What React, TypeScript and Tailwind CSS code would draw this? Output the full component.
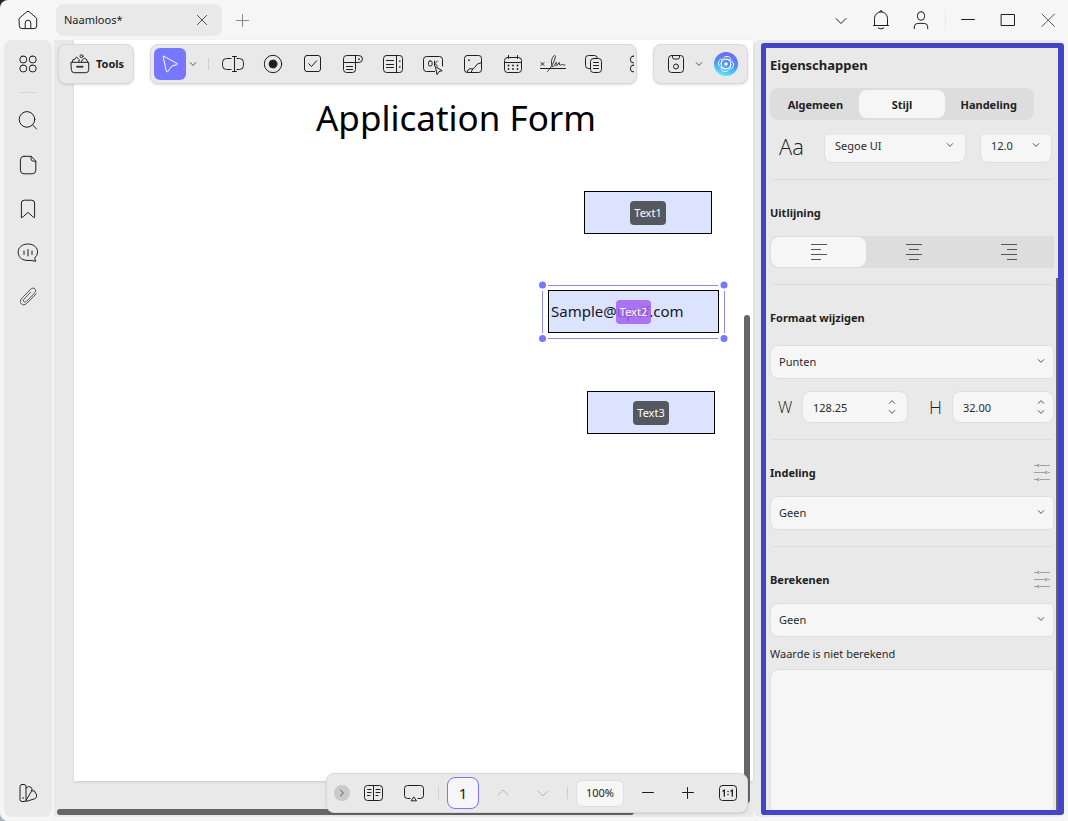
import type { ReactNode } from 'react';

const FONT = "font-['Noto_Sans','Open_Sans',sans-serif]";

function Icon({ children, color = 'text-[#1f1f1f]' }: { children: ReactNode; color?: string }) {
  return (
    <svg
      viewBox="0 0 28 28"
      className={`size-7 shrink-0 ${color}`}
      fill="none"
      stroke="currentColor"
      strokeWidth="1"
      strokeLinecap="round"
      strokeLinejoin="round"
      aria-hidden="true"
    >
      {children}
    </svg>
  );
}

function Chevron({ className = '' }: { className?: string }) {
  return (
    <svg viewBox="0 0 8 8" className={`size-2 shrink-0 text-[#555] ${className}`} fill="none" stroke="currentColor" strokeWidth="1" aria-hidden="true">
      <path d="M1 2.3 4 5.4 7 2.3" />
    </svg>
  );
}

function IconButton({ label, width = 'w-10', height = 'h-full', color, children }: { label: string; width?: string; height?: string; color?: string; children: ReactNode }) {
  return (
    <button type="button" aria-label={label} className={`flex shrink-0 items-center justify-center ${width} ${height}`}>
      <Icon color={color}>{children}</Icon>
    </button>
  );
}

function TitleBar() {
  return (
    <header className="flex h-10 shrink-0 items-center">
      <IconButton label="Home" width="w-14">
        <path d="M5.3 12.3 12.6 5.9Q14 4.8 15.4 5.9L22.7 12.3V20Q22.7 22.6 20.1 22.6H7.9Q5.3 22.6 5.3 20Z" />
        <path d="M11.2 22.5V17Q11.2 14.2 14 14.2T16.8 17V22.5" />
      </IconButton>
      <div className="flex h-8 w-[166px] items-center justify-between rounded-lg bg-[#e9e9e9] pl-2 pr-1.5">
        <span className="text-[11px] leading-5 text-[#222]">Naamloos*</span>
        <IconButton label="Tabblad sluiten" width="w-7" color="text-[#555]">
          <path d="m9.3 9.3 9.4 9.4M18.7 9.3l-9.4 9.4" />
        </IconButton>
      </div>
      <IconButton label="Nieuw tabblad" color="text-[#8a8a8a]">
        <path d="M14.5 8.5v12M8.500 14.5h12" />
      </IconButton>
      <div className="ml-auto flex h-full items-center">
        <IconButton label="Meer">
          <path d="m9 12.500 5 5 5-5" />
        </IconButton>
        <IconButton label="Meldingen">
          <path d="M7.500 19V12.4a6.500 6.500 0 0 1 13 0V19M6.500 19.500h15M12.8 5.8a1.2 1.2 0 0 1 2.4 0M11.2 22.1q2.8 1.8 5.6 0" />
        </IconButton>
        <IconButton label="Account">
          <rect x="10.500" y="5.700" width="7" height="8.600" rx="3.500" />
          <path d="M7.3 22.7V20.8Q7.3 17.4 10.8 17.4H17.2Q20.7 17.4 20.7 20.8V22.7" />
        </IconButton>
        <span className="ml-1 mr-0.5 h-5 w-px bg-[#e9e9e9]" />
        <IconButton label="Minimaliseren">
          <path d="M7.500 13.500h13" />
        </IconButton>
        <IconButton label="Maximaliseren">
          <rect x="7.500" y="8.500" width="13" height="11" />
        </IconButton>
        <IconButton label="Sluiten" color="text-[#555]">
          <path d="m8 8 12.4 12.4M20.4 8 8 20.4" />
        </IconButton>
      </div>
    </header>
  );
}

function Sidebar() {
  return (
    <nav aria-label="Zijbalk" className="flex w-12 shrink-0 flex-col items-center rounded-lg bg-[#e9e9e9] py-0.5">
      <IconButton label="Overzicht" height="h-11">
        <rect x="6" y="6.2" width="6.6" height="6.6" rx="2.6" />
        <rect x="15.4" y="6.2" width="6.6" height="6.6" rx="2.6" />
        <rect x="6" y="15.2" width="6.6" height="6.6" rx="2.6" />
        <rect x="15.4" y="15.2" width="6.6" height="6.6" rx="2.6" />
      </IconButton>
      <span className="my-1.5 h-px w-4 bg-[#d4d4d4]" />
      <IconButton label="Zoeken" height="h-11">
        <circle cx="13" cy="12.4" r="7.8" />
        <path d="m18.7 18 3.9 4" />
      </IconButton>
      <IconButton label="Pagina's" height="h-11">
        <path d="M10 5.3h7.2l4.6 4.8v9.1q0 3.6-3.6 3.6H10q-3.6 0-3.6-3.6V8.9Q6.4 5.3 10 5.3ZM17 5.5v2.2q0 2.5 2.5 2.5h2.2" />
      </IconButton>
      <IconButton label="Bladwijzers" height="h-11">
        <path d="M7.4 22V8q0-2.8 2.8-2.8h7.6q2.8 0 2.8 2.8V22q0 1.2-1 .4L14 17.4l-5.6 5q-1 .8-1-.4Z" />
      </IconButton>
      <IconButton label="Opmerkingen" height="h-11">
        <path d="M21.3 22.2 16 21.3Q14 21.8 12 21.3C7.400 20.800 4.200 17.700 4.200 13.100 4.200 8.500 8 5 13.900 5S23.600 8.500 23.600 13.100Q23.600 16.500 20.900 18.900Z" />
        <path d="M10 12v3.500M14 10.500v6.500M18 12v3.500" />
      </IconButton>
      <IconButton label="Bijlagen" height="h-11" color="text-[#444]">
        <path d="m16.700 9.200-6.900 7.100c-.8 1-.5 2 .1 2.500.8.600 1.800.3 2.600-.5l8-8.200c1.600-1.700 1.500-3.200.5-4.200-1.200-1.200-3-1-4.300.3l-8.800 9c-1.900 2-2 4.300-.6 5.700 1.500 1.500 3.800 1.200 5.600-.6l9.300-9.500" strokeWidth="0.900" />
      </IconButton>
      <div className="mt-auto flex">
        <IconButton label="Thema" height="h-11">
          <rect x="6" y="5.500" width="6" height="17" rx="2" />
          <path d="M12 9q2.400-2.700 5-.8 2 1.600.5 4L12 21.500M17.700 12l2.600-.2 2.300 4.200q.8 2.600-1.700 3.700L12 22.500" />
          <path d="M9 19h.1" strokeWidth="1.600" />
        </IconButton>
      </div>
    </nav>
  );
}

const bar = 'flex h-10 rounded-lg border border-[#d9d9d9] bg-[#e9e9e9] shadow-sm';

function TopToolbars() {
  return (
    <div className="absolute left-1 right-[5px] top-1 flex gap-4">
      <button type="button" className={`${bar} w-[76px] shrink-0 items-center gap-0.5 pl-[7px] text-[11px] font-bold text-[#1f1f1f]`}>
        <Icon>
          <path d="M5.300 12.300h17.400v7.400q0 3-3 3H8.300q-3 0-3-3ZM6.200 12.200 7 9.500h1.600L10.500 7l2.700 2.600-.3 2.400M15.500 12l.4-1.600 2.400-2.200 2 1 1.400 2.800M11 16.300h6v.8h-6Z" />
          <circle cx="15.500" cy="6.200" r="1.500" />
        </Icon>
        Tools
      </button>
      <div role="toolbar" aria-label="Formuliervelden" className={`${bar} min-w-0 flex-1 items-center pl-[3px] pr-0.5`}>
        <button type="button" aria-label="Selecteren" className="flex size-8 shrink-0 items-center justify-center rounded-md bg-[#7676ff]">
          <Icon color="text-white">
            <path d="M8 6.300 21 13.500q1 .8-.3 1.200l-5.100 1.400-3.700 5.400q-1 1.200-1.500-.2L7.200 7Q7.200 5.800 8 6.300Z" />
          </Icon>
        </button>
        <button type="button" aria-label="Selectieopties" className="flex h-8 w-3.5 shrink-0 items-center justify-center">
          <Chevron />
        </button>
        <span className="ml-2 mr-1 h-3 w-px shrink-0 bg-[#cfcfcf]" />
        <div className="flex h-full min-w-0 flex-1 overflow-hidden">
          <IconButton label="Tekstveld">
            <path d="M12 8.500H7.500q-4 0-4 4v3q0 4 4 4H12M18 8.500h2.500q4 0 4 4v3q0 4-4 4H18M13.500 6.500h4M15.500 6.500v15M13.500 21.500h4" />
          </IconButton>
          <IconButton label="Keuzerondje">
            <circle cx="14" cy="14" r="8.700" />
            <circle cx="14" cy="14" r="3.900" fill="currentColor" />
          </IconButton>
          <IconButton label="Selectievakje">
            <rect x="5.500" y="5.500" width="16" height="16" rx="2.500" />
            <path d="m9.700 13.700 2.800 2.800 5.200-5.800" />
          </IconButton>
          <IconButton label="Vervolgkeuzelijst">
            <path d="M8.500 5.500h11.200q3.800 0 3.800 3.500t-3.800 3.500H4.500V8.500q0-3 3-3ZM4.500 12.500v7q0 3 3 3h6q3 0 3-3V5.500M7.500 16.500h6M7.500 19.500h6" />
            <path d="M20 9v.2" strokeWidth="1.700" />
          </IconButton>
          <IconButton label="Keuzelijst">
            <rect x="4.500" y="5.500" width="19" height="17" rx="3" />
            <path d="M17.500 5.500v17M7.500 10.500h7M7.500 14.500h7M7.500 17.500h7" />
            <path d="M20.800 11v.2M20.800 16.800v.2" strokeWidth="1.500" />
          </IconButton>
          <IconButton label="Knop">
            <path d="M15.500 21.500H7.500q-3 0-3-3V9.500q0-3 3-3h13q3 0 3 3V16" />
            <rect x="9.500" y="11" width="3.600" height="5" rx="1.500" />
            <path d="M15.500 11v5M18.500 11l-2.600 2.600 2.600 2.400" />
            <path d="m16.800 16.800 6.400 3.900-3.200.8-1.800 2.800Z" fill="#e9e9e9" />
          </IconButton>
          <IconButton label="Afbeelding">
            <rect x="5.500" y="5.500" width="17" height="17" rx="2.800" />
            <path d="M8 22.300q.5-3 3-3.700l2.600.5q-.5 1.500-1.500 3.200M22.500 12.500q-5 .5-6.800 5l-2.300 1.600" />
            <path d="M10 10v.2" strokeWidth="1.700" />
          </IconButton>
          <IconButton label="Datum">
            <path d="M8.500 7.500h11q3 0 3 3v9q0 3-3 3h-11q-3 0-3-3v-9q0-3 3-3ZM5.500 12.500h17M9.500 5.500v3M18.500 5.500v3" />
            <path d="M9.500 15.500v.1M14 15.500v.1M18.500 15.500v.1M9.500 19v.1M14 19v.1M18.500 19v.1" strokeWidth="1.800" />
          </IconButton>
          <IconButton label="Handtekening">
            <path d="M1.500 18.500h25M2 12.500l3 3M5 12.500l-3 3" />
            <path d="M8.500 21.500C11 19.500 16.500 10 16.300 6.500 16 3.500 12.500 7.500 12.500 12c0 5 1.500 5.500 2.500 4 1-1 1.800-4.500 2.300-3.700.4.700-1 3.700.2 3.700s2-4 2.800-3.500c.6.500-.3 2.800.8 2.800.8 0 1-.8 1.700-1 .8 0 1 1 3 .8" strokeWidth="0.900" />
          </IconButton>
          <IconButton label="Velden dupliceren" width="w-[42px]">
            <path d="M10.500 18.500H8.500q-3 0-3-3v-7q0-3 3-3h6q3 0 3 3" />
            <rect x="10.500" y="8.500" width="11" height="14" rx="3" />
            <path d="M13.500 12.500h5M13.500 15.500h5M13.500 18.500h5" />
          </IconButton>
          <IconButton label="Meer velden">
            <rect x="9.500" y="6.200" width="6.600" height="6.600" rx="2.600" />
            <rect x="9.500" y="15.200" width="6.600" height="6.600" rx="2.600" />
          </IconButton>
        </div>
      </div>
      <div role="toolbar" aria-label="Bestand" className={`${bar} w-[95px] shrink-0 items-center pl-2`}>
        <IconButton label="Opslaan" width="w-7">
          <rect x="6.500" y="5.500" width="15" height="17" rx="3" />
          <path d="M10.500 5.700v1.600q0 1.700 1.700 1.700h3.600q1.700 0 1.700-1.700V5.700" />
          <circle cx="14" cy="16.500" r="2.500" />
        </IconButton>
        <button type="button" aria-label="Opslagopties" className="flex h-8 w-[18px] items-center justify-center">
          <Chevron />
        </button>
        <button type="button" aria-label="AI-assistent" className="ml-1.5">
          <svg viewBox="0 0 24 24" className="size-6" fill="none" stroke="#fff" strokeWidth="1" aria-hidden="true">
            <defs>
              <linearGradient id="assistant" x1="0.700" y1="0" x2="0.400" y2="1">
                <stop offset="0" stopColor="#7b62ee" />
                <stop offset="0.500" stopColor="#4b91f5" />
                <stop offset="1" stopColor="#5ee6fb" />
              </linearGradient>
            </defs>
            <circle cx="12" cy="12" r="12" fill="url(#assistant)" stroke="none" />
            <circle cx="12" cy="12" r="4.800" />
            <path d="M7.200 12C7.200 7.500 10 4.500 13 4.500c2 0 3.500 1.200 4 3M12 7.200c4.500 0 7.500 2.800 7.500 5.800 0 2-1.200 3.500-3 4M16.800 12c0 4.500-2.800 7.500-5.800 7.500-2 0-3.500-1.200-4-3M12 16.800c-4.500 0-7.500-2.800-7.500-5.800 0-2 1.200-3.500 3-4" />
            <circle cx="12" cy="12" r="1.700" fill="#fff" stroke="none" />
          </svg>
        </button>
      </div>
    </div>
  );
}

function BottomToolbar() {
  return (
    <div role="toolbar" aria-label="Paginanavigatie" className={`${bar} absolute bottom-1 right-[5px] items-center pl-[3px]`}>
      <button type="button" aria-label="Inklappen" className="flex w-6 justify-center">
        <span className="flex size-4 items-center justify-center rounded-full bg-[#c9c9c9]">
          <Chevron className="-rotate-90" />
        </span>
      </button>
      <IconButton label="Leesmodus">
        <path d="M13.500 6.500h-6q-3 0-3 3v9q0 3 3 3h6V6.500h6q3 0 3 3v9q0 3-3 3h-6M7.500 10.500h3.500M7.500 13.500h3.500M7.500 16.500h2.500M16 10.500h4M16 13.500h4M16 16.500h2" />
      </IconButton>
      <IconButton label="Presentatie">
        <path d="M10 19.500H7.500q-3 0-3-3v-7q0-3 3-3h13q3 0 3 3v7q0 3-3 3H18M14 18.200l2.500 3.600h-5Z" />
      </IconButton>
      <span className="ml-1 mr-2 h-3 w-px bg-[#cfcfcf]" />
      <input aria-label="Paginanummer" defaultValue="1" className="h-8 w-8 rounded-lg border border-[#7676ff] bg-[#f6f6f8] text-center text-[15px] text-[#222] outline-none" />
      <div className="ml-1 flex h-full">
        <IconButton label="Vorige pagina" color="text-[#b5b5b5]">
          <path d="m9 16 5-5 5 5" />
        </IconButton>
        <IconButton label="Volgende pagina" color="text-[#b5b5b5]">
          <path d="m9 12 5 5 5-5" />
        </IconButton>
      </div>
      <span className="ml-1 mr-2 h-3 w-px bg-[#cfcfcf]" />
      <button type="button" className="mr-1 h-[27px] w-12 rounded-md border border-[#dedede] bg-[#f6f6f6] text-[11px] text-[#222]">100%</button>
      <IconButton label="Uitzoomen">
        <path d="M8.500 13.500h11" />
      </IconButton>
      <IconButton label="Inzoomen">
        <path d="M8.500 13.500h11M13.500 8.500v11" />
      </IconButton>
      <IconButton label="Ware grootte" width="w-[39px]">
        <rect x="5.500" y="6.500" width="17" height="15" rx="3" />
        <path d="m9 12 1.300-1v6M17 12l1.300-1v6" strokeWidth="1.300" />
        <path d="M14 12.500v.1M14 15.500v.1" strokeWidth="1.500" />
      </IconButton>
    </div>
  );
}

function FieldTag({ children, color = 'bg-[#55585f]' }: { children: ReactNode; color?: string }) {
  return <span className={`flex h-6 items-center rounded px-1 pt-px text-[11px] text-white ${color}`}>{children}</span>;
}

const field = 'absolute flex h-[43px] items-center justify-center border border-black bg-[#dce3ff]';

function Canvas() {
  return (
    <main className="relative ml-0.5 flex min-w-0 flex-1 flex-col bg-[#e9e9e9]">
      <div className="relative mb-9 ml-5 flex-1 overflow-hidden bg-white shadow">
        <h1 className="ml-[242px] pt-[51px] text-[35px] leading-[54px] whitespace-nowrap text-black">Application Form</h1>
        <div className={`${field} left-[510px] top-[151px] w-[128px]`}>
          <FieldTag>Text1</FieldTag>
        </div>
        <div className={`${field} left-[474px] top-[250px] w-[171px]`}>
          <span className="absolute left-0.5 text-[15px] text-[#111827]">Sample@updf.com</span>
          <span className="relative">
            <FieldTag color="bg-[#a05ff0]/85">Text2</FieldTag>
          </span>
        </div>
        <svg viewBox="0 0 190 62" className="absolute left-[464px] top-[241px] h-[62px] w-[190px]" fill="none" aria-hidden="true">
          <path d="M10 4.500h170M10 57.500h170M4.500 10v42M186.500 10v42" stroke="#8b8be8" />
          <g fill="#7676ff">
            <circle cx="4.500" cy="4" r="3.500" />
            <circle cx="186" cy="4" r="3.500" />
            <circle cx="4.500" cy="57.500" r="3.500" />
            <circle cx="186" cy="57.500" r="3.500" />
          </g>
        </svg>
        <div className={`${field} left-[513px] top-[351px] w-[128px]`}>
          <FieldTag>Text3</FieldTag>
        </div>
      </div>
      <div className="absolute bottom-3.5 right-[3px] top-[275px] w-1.5 rounded-full bg-[#666]" />
      <div className="absolute bottom-0.5 left-[3px] right-[119px] h-1.5 rounded-full bg-[#666]" />
      <TopToolbars />
      <BottomToolbar />
    </main>
  );
}

const control = 'block w-full appearance-none border border-[#dedede] bg-[#f6f6f6] pt-px text-[11px] text-[#2a2a2a] outline-none';

function Select({ label, value, className, shape = 'rounded-l-lg rounded-r-sm pl-2', arrow = 'right-[9px]' }: { label: string; value: string; className: string; shape?: string; arrow?: string }) {
  return (
    <div className={`relative ${className}`}>
      <select aria-label={label} className={`${control} h-[34px] ${shape}`}>
        <option>{value}</option>
      </select>
      <Chevron className={`pointer-events-none absolute top-3 ${arrow}`} />
    </div>
  );
}

function Stepper({ id, value, className, arrows }: { id: string; value: string; className: string; arrows: string }) {
  return (
    <div className={`relative ${className}`}>
      <input id={id} defaultValue={value} className={`${control} h-8 rounded-lg pl-2.5`} />
      <div className={`absolute top-[7px] flex flex-col gap-0.5 ${arrows}`}>
        <button type="button" aria-label="Verhogen"><Chevron className="block rotate-180" /></button>
        <button type="button" aria-label="Verlagen"><Chevron className="block" /></button>
      </div>
    </div>
  );
}

function Heading({ children, settings = false }: { children: string; settings?: boolean }) {
  return (
    <div className="mt-[21px] flex h-6 items-center justify-between">
      <h3 className="text-[11px] font-bold text-[#222]">{children}</h3>
      {settings && (
        <button type="button" aria-label={`${children} instellingen`} className="mr-1 mb-0.5">
          <svg viewBox="0 0 16 18" className="block h-[18px] w-4" fill="none" stroke="#a0a0a0" aria-hidden="true">
            <path d="M0 2.500h3M6 2.500h10M0 9.500h11M14 9.500h2M0 16.500h3M6 16.500h10" />
            <path d="M3.500 1.500h1.500v2H3.500ZM11.500 8.500H13v2h-1.500ZM3.500 15.500h1.500v2H3.500Z" />
          </svg>
        </button>
      )}
    </div>
  );
}

function Divider() {
  return <hr className="mt-4 mr-px ml-0.5 border-[#dcdcdc]" />;
}

const alignments = [
  { label: 'Links uitlijnen', path: 'M6 6.500h16M6 11.500h10M6 16.500h16M6 21.500h10' },
  { label: 'Centreren', path: 'M6 6.500h16M9 11.500h10M6 16.500h16M9 21.500h10' },
  { label: 'Rechts uitlijnen', path: 'M6 6.500h16M12 11.500h10M6 16.500h16M12 21.500h10' },
];

function Properties() {
  return (
    <aside className="mr-1 flex w-[311px] shrink-0 rounded-lg bg-[#e9e9e9] pb-0.5 pl-2 pt-[3px]">
      <div className="relative flex min-w-0 flex-1 flex-col overflow-hidden rounded-[3px] border-[5px] border-r-[6px] border-[#4145c6] px-1">
        <h2 className="mt-1.5 text-[13px] leading-[22px] font-bold text-[#222]">Eigenschappen</h2>
        <div role="tablist" className="mt-3 flex h-8 w-[264px] shrink-0 rounded-lg bg-[#dddddd] p-0.5 text-[11px] font-bold text-[#222]">
          <button type="button" role="tab" aria-selected="false" className="flex-1 pt-0.5">Algemeen</button>
          <button type="button" role="tab" aria-selected="true" className="flex-1 rounded-lg bg-[#f6f6f6] pt-0.5">Stijl</button>
          <button type="button" role="tab" aria-selected="false" className="flex-1 pt-0.5">Handeling</button>
        </div>
        <div className="mt-[15px] min-h-0 flex-1 overflow-hidden">
          <div className="-mt-1.5 flex items-center">
            <span className="w-[54px] pl-[9px] font-['Open_Sans'] text-[22px] leading-5 font-light text-[#222]">Aa</span>
            <Select label="Lettertype" value="Segoe UI" className="w-[142px]" shape="rounded-lg pl-2.5" arrow="right-3" />
            <Select label="Tekengrootte" value="12.0" className="ml-3.5 w-[72px]" shape="rounded-lg pl-2.5" arrow="right-3" />
          </div>
          <Divider />
          <Heading>Uitlijning</Heading>
          <div className="mt-[11px] flex h-8 overflow-hidden rounded-l-lg bg-[#dddddd] py-px pl-px">
            {alignments.map((a, i) => (
              <button key={a.label} type="button" aria-label={a.label} aria-pressed={i === 0} className={i === 0 ? 'flex w-[95px] shrink-0 items-center justify-center rounded-lg bg-[#f6f6f6]' : 'flex w-[95px] shrink-0 items-center justify-center'}>
                <svg viewBox="0 0 28 28" className="size-7" fill="none" stroke="#555" strokeWidth="1" aria-hidden="true"><path d={a.path} /></svg>
              </button>
            ))}
          </div>
          <Divider />
          <Heading>Formaat wijzigen</Heading>
          <Select label="Eenheid" value="Punten" className="mt-[15px]" />
          <div className="mt-3 flex items-center text-[#222]">
            <label htmlFor="width" className="w-8 pl-2 font-['Open_Sans'] text-[16px] font-light">W</label>
            <Stepper id="width" value="128.25" className="w-[106px]" arrows="right-3" />
            <label htmlFor="height" className="w-11 pl-[21px] font-['Open_Sans'] text-[18px] leading-6 font-light">H</label>
            <Stepper id="height" value="32.00" className="min-w-0 flex-1" arrows="right-[9px]" />
          </div>
          <Divider />
          <Heading settings>Indeling</Heading>
          <Select label="Indeling" value="Geen" className="mt-[11px]" />
          <Divider />
          <Heading settings>Berekenen</Heading>
          <Select label="Berekenen" value="Geen" className="mt-[11px]" />
          <label htmlFor="calculation" className="mt-[5px] block text-[11px] leading-6 text-[#2a2a2a]">Waarde is niet berekend</label>
          <textarea id="calculation" className="mt-[3px] block h-40 w-full resize-none rounded-l-lg border border-[#dedede] bg-[#f6f6f6] outline-none" />
        </div>
        <div className="absolute bottom-0 right-0 top-[230px] w-0.5 bg-[#666]" />
      </div>
    </aside>
  );
}

export default function App() {
  return (
    <div className="h-screen bg-linear-to-b from-[#2a2024] to-[#a9b0b5]">
      <div className={`${FONT} flex h-full flex-col overflow-hidden rounded-l-lg bg-[#f6f6f6]`}>
        <TitleBar />
        <div className="flex min-h-0 flex-1 pb-1 pl-1">
          <Sidebar />
          <Canvas />
          <Properties />
        </div>
      </div>
    </div>
  );
}
